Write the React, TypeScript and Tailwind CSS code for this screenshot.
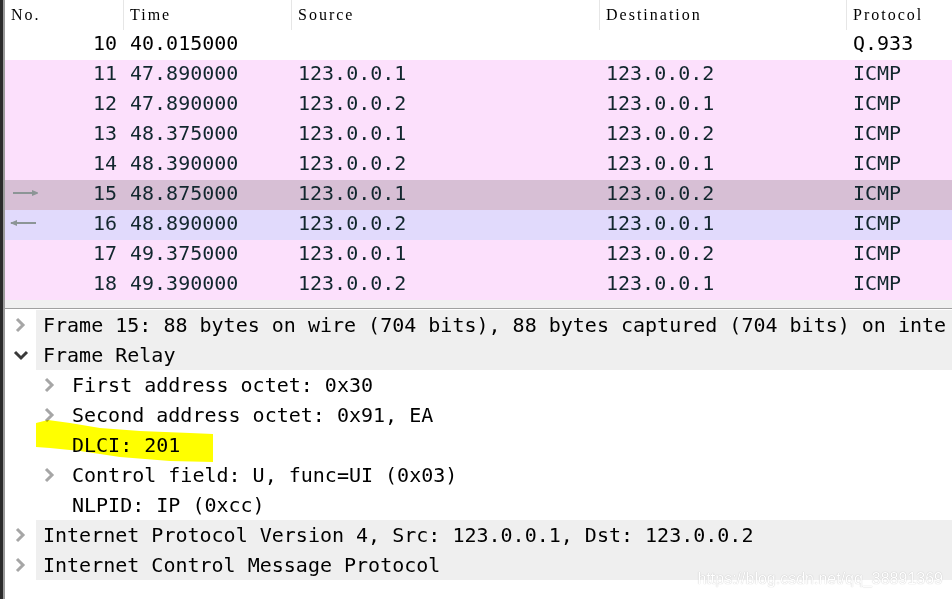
import React from 'react';

type Packet = {
  no: number;
  time: string;
  src: string;
  dst: string;
  proto: string;
  rowClass: string;
  arrow?: 'in' | 'out';
};

const packets: Packet[] = [
  { no: 10, time: '40.015000', src: '', dst: '', proto: 'Q.933', rowClass: 'bg-white text-black' },
  { no: 11, time: '47.890000', src: '123.0.0.1', dst: '123.0.0.2', proto: 'ICMP', rowClass: 'bg-[#fce0fc] text-[#12272e]' },
  { no: 12, time: '47.890000', src: '123.0.0.2', dst: '123.0.0.1', proto: 'ICMP', rowClass: 'bg-[#fce0fc] text-[#12272e]' },
  { no: 13, time: '48.375000', src: '123.0.0.1', dst: '123.0.0.2', proto: 'ICMP', rowClass: 'bg-[#fce0fc] text-[#12272e]' },
  { no: 14, time: '48.390000', src: '123.0.0.2', dst: '123.0.0.1', proto: 'ICMP', rowClass: 'bg-[#fce0fc] text-[#12272e]' },
  { no: 15, time: '48.875000', src: '123.0.0.1', dst: '123.0.0.2', proto: 'ICMP', rowClass: 'bg-[#d7bfd5] text-[#12272e]', arrow: 'out' },
  { no: 16, time: '48.890000', src: '123.0.0.2', dst: '123.0.0.1', proto: 'ICMP', rowClass: 'bg-[#e1dafc] text-[#12272e]', arrow: 'in' },
  { no: 17, time: '49.375000', src: '123.0.0.1', dst: '123.0.0.2', proto: 'ICMP', rowClass: 'bg-[#fce0fc] text-[#12272e]' },
  { no: 18, time: '49.390000', src: '123.0.0.2', dst: '123.0.0.1', proto: 'ICMP', rowClass: 'bg-[#fce0fc] text-[#12272e]' },
];

type TreeItem = {
  text: string;
  level: 0 | 1;
  toggle?: 'open' | 'closed';
};

const tree: TreeItem[] = [
  { text: 'Frame 15: 88 bytes on wire (704 bits), 88 bytes captured (704 bits) on inte', level: 0, toggle: 'closed' },
  { text: 'Frame Relay', level: 0, toggle: 'open' },
  { text: 'First address octet: 0x30', level: 1, toggle: 'closed' },
  { text: 'Second address octet: 0x91, EA', level: 1, toggle: 'closed' },
  { text: 'DLCI: 201', level: 1 },
  { text: 'Control field: U, func=UI (0x03)', level: 1, toggle: 'closed' },
  { text: 'NLPID: IP (0xcc)', level: 1 },
  { text: 'Internet Protocol Version 4, Src: 123.0.0.1, Dst: 123.0.0.2', level: 0, toggle: 'closed' },
  { text: 'Internet Control Message Protocol', level: 0, toggle: 'closed' },
];

const mono = 'font-["DejaVu_Sans_Mono",monospace] text-[20px]';
const head = 'font-["Liberation_Serif",serif] text-[16px] tracking-[2px] text-black';

const Arrow = ({ dir }: { dir: 'in' | 'out' }) => (
  <svg width="30" height="10" viewBox="0 0 30 10" className="shrink-0">
    {dir === 'out' ? (
      <>
        <line x1="5" y1="5" x2="29" y2="5" stroke="#8c9596" strokeWidth="2" />
        <polygon points="24,2 31,5 24,8" fill="#8c9596" />
      </>
    ) : (
      <>
        <line x1="3" y1="5" x2="28" y2="5" stroke="#8c9596" strokeWidth="2" />
        <polygon points="9,2 2,5 9,8" fill="#8c9596" />
      </>
    )}
  </svg>
);

const Chevron = ({ open }: { open: boolean }) =>
  open ? (
    <svg width="16" height="11" viewBox="0 0 16 11">
      <polyline points="2,2 8,8 14,2" fill="none" stroke="#3a3a3a" strokeWidth="3" />
    </svg>
  ) : (
    <svg width="11" height="16" viewBox="0 0 11 16">
      <polyline points="2,2 8,8 2,14" fill="none" stroke="#a6a6a6" strokeWidth="3" />
    </svg>
  );

const PacketList = () => (
  <div className="flex flex-col">
    <div className={`flex h-[30px] items-center bg-white ${head}`}>
      <div className="w-[118px] h-full flex items-center pl-[6px]">No.</div>
      <div className="w-[168px] h-full flex items-center pl-[6px] border-l border-[#e6e6e6]">Time</div>
      <div className="w-[308px] h-full flex items-center pl-[6px] border-l border-[#e6e6e6]">Source</div>
      <div className="w-[247px] h-full flex items-center pl-[6px] border-l border-[#e6e6e6]">Destination</div>
      <div className="flex-1 h-full flex items-center pl-[6px] border-l border-[#e6e6e6]">Protocol</div>
    </div>
    {packets.map((p) => (
      <div key={p.no} className={`flex h-[30px] pb-[4px] leading-[26px] whitespace-nowrap ${mono} ${p.rowClass}`}>
        <div className="w-[118px] flex items-center pl-[3px] pr-[6px]">
          {p.arrow && <Arrow dir={p.arrow} />}
          <span className="flex-1 text-right">{p.no}</span>
        </div>
        <div className="w-[168px] pl-[7px]">{p.time}</div>
        <div className="w-[308px] pl-[7px]">{p.src}</div>
        <div className="w-[247px] pl-[7px]">{p.dst}</div>
        <div className="flex-1 pl-[7px]">{p.proto}</div>
      </div>
    ))}
  </div>
);

const DetailTree = () => (
  <div className="flex flex-col pt-px">
    {tree.map((t, i) => (
      <div key={i} className={`flex h-[30px] leading-[30px] whitespace-nowrap text-black ${mono}`}>
        {t.level === 1 && <div className="w-[29px] shrink-0" />}
        <div className="w-[31px] shrink-0 flex items-center justify-center">
          {t.toggle && <Chevron open={t.toggle === 'open'} />}
        </div>
        <div className={`flex-1 pl-[7px] overflow-hidden ${t.level === 0 ? 'bg-[#efefef]' : ''}`}>{t.text}</div>
      </div>
    ))}
  </div>
);

export default function App() {
  return (
    <div className="relative w-[952px] h-[599px] overflow-hidden bg-white flex">
      <div className="w-[3px] bg-[#2b2b2b] shrink-0" />
      <div className="w-[2px] bg-[#9a9a9a] shrink-0" />
      <div className="flex-1 flex flex-col min-w-0">
        <PacketList />
        <div className="h-[8px] bg-[#f0f0f0]" />
        <div className="h-px bg-[#a0a0a0]" />
        <DetailTree />
      </div>

      <svg
        className="absolute left-0 top-0 pointer-events-none mix-blend-multiply"
        width="952"
        height="599"
        viewBox="0 0 952 599"
      >
        <polygon
          points="36,423 48,420 70,423 100,428 140,431 190,433 213,434 213,462 170,461 120,457 80,451 50,448 36,447"
          fill="#ffff00"
        />
      </svg>

      <div className='absolute right-[9px] bottom-[8px] font-["Liberation_Sans",Arial,sans-serif] text-[16px] text-white [text-shadow:0_0_1px_rgba(0,0,0,0.3)] pointer-events-none'>
        https://blog.csdn.net/qq_38891369
      </div>
    </div>
  );
}
